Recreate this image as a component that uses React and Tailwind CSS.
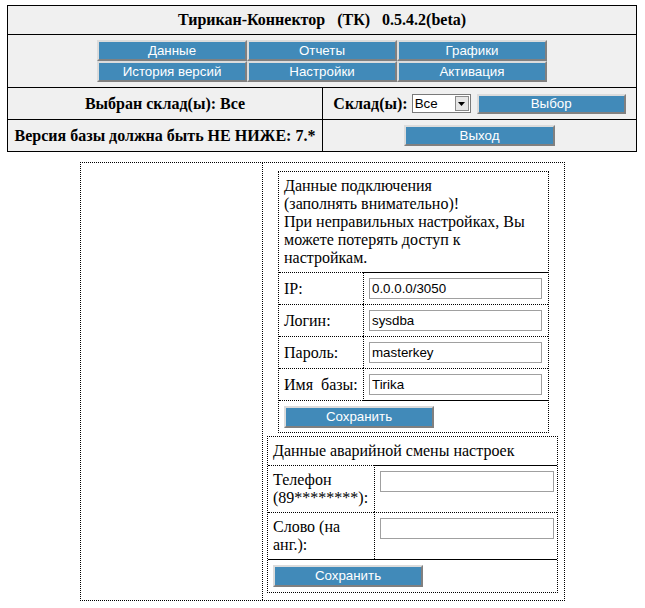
import React from "react";

const SANS = "font-['Liberation_Sans',Arial,sans-serif]";

function Btn({ children, w, h }) {
  return (
    <div
      className={`flex items-center justify-center bg-[#418ab9] text-white font-['Liberation_Sans',Arial,sans-serif] text-[13.33px] leading-none border-2 border-t-[#dcdcdc] border-l-[#dcdcdc] border-r-[#808080] border-b-[#808080] ${w} ${h}`}
    >
      {children}
    </div>
  );
}

function Field({ value, w }) {
  return (
    <input
      readOnly
      defaultValue={value}
      className={`block h-[21px] border border-[#a0a0a0] bg-white pl-[2px] text-[13.33px] text-black font-['Liberation_Sans',Arial,sans-serif] outline-none ${w}`}
    />
  );
}

function Row({ label, value, topSolid, last }) {
  return (
    <div className="flex">
      <div
        className={`w-[84px] flex items-center pl-[5px] border-t border-dotted border-black leading-[18px] ${last ? "border-b" : ""}`}
      >
        <span className="whitespace-pre">{label}</span>
      </div>
      <div
        className={`flex-1 border-l border-dotted border-black pl-[5px] py-[5px] border-t ${topSolid ? "[border-top-style:solid]" : ""} ${last ? "border-b [border-bottom-style:solid]" : ""}`}
      >
        <Field value={value} w="w-[173px]" />
      </div>
    </div>
  );
}

export default function App() {
  return (
    <div className="w-[645px] min-h-[608px] bg-white text-black font-['Liberation_Serif','Times_New_Roman',serif] text-[16px]">
      <div className="h-[5px]" />
      {/* Top header table */}
      <div className="ml-[7px] w-[630px] border border-black bg-[#f0f0f0]">
        <div className="h-[28px] flex items-center justify-center font-bold whitespace-pre">
          {"Тирикан-Коннектор   (ТК)   0.5.4.2(beta)"}
        </div>
        <div className="border-t border-black py-[5px] flex justify-center">
          <div className="grid grid-cols-3 w-[450px]">
            <Btn w="w-[150px]" h="h-[21px]">Данные</Btn>
            <Btn w="w-[150px]" h="h-[21px]">Отчеты</Btn>
            <Btn w="w-[150px]" h="h-[21px]">Графики</Btn>
            <Btn w="w-[150px]" h="h-[21px]">История версий</Btn>
            <Btn w="w-[150px]" h="h-[21px]">Настройки</Btn>
            <Btn w="w-[150px]" h="h-[21px]">Активация</Btn>
          </div>
        </div>
        <div className="border-t border-black flex h-[32px]">
          <div className="w-[314px] flex items-center justify-center font-bold whitespace-nowrap">
            Выбран склад(ы): Все
          </div>
          <div className="flex-1 border-l border-black flex items-center justify-center">
            <span className="font-bold">Склад(ы):</span>
            <div className="ml-[4px] w-[59px] h-[19px] bg-white border border-[#7a7a7a] flex items-center justify-between">
              <span className={`${SANS} text-[13.33px] pl-[2px] leading-none`}>Все</span>
              <div className="mr-[1px] w-[14px] h-[15px] bg-[#e6e6e6] border border-[#8a8a8a] flex items-center justify-center">
                <svg width="7" height="4" viewBox="0 0 7 4">
                  <path d="M0 0H7L3.5 4Z" fill="#000" />
                </svg>
              </div>
            </div>
            <div className="ml-[6px]">
              <Btn w="w-[149px]" h="h-[20px]">Выбор</Btn>
            </div>
          </div>
        </div>
        <div className="border-t border-black flex h-[32px]">
          <div className="w-[314px] flex items-center justify-center font-bold whitespace-nowrap">
            Версия базы должна быть НЕ НИЖЕ: 7.*
          </div>
          <div className="flex-1 border-l border-black flex items-center justify-center">
            <Btn w="w-[151px]" h="h-[21px]">Выход</Btn>
          </div>
        </div>
      </div>

      {/* Lower settings area */}
      <div className="mx-auto mt-[10px] w-[485px] border border-dotted border-black flex">
        <div className="w-[181px]" />
        <div className="flex-1 border-l border-dotted border-black flex flex-col items-start pt-[8px] pb-[7px]">
          {/* Connection table */}
          <div className="ml-[15px] w-[271px] border border-dotted border-black">
            <div className="h-[100px] px-[5px] py-[5px] leading-[18px]">
              Данные подключения
              <br />
              (заполнять внимательно)!
              <br />
              При неправильных настройках, Вы
              <br />
              можете потерять доступ к
              <br />
              настройкам.
            </div>
            <Row label="IP:" value="0.0.0.0/3050" topSolid />
            <Row label="Логин:" value="sysdba" />
            <Row label="Пароль:" value="masterkey" />
            <Row label={"Имя  базы:"} value="Tirika" last />
            <div className="h-[31px] pl-[5px] pt-[5px]">
              <Btn w="w-[150px]" h="h-[22px]">Сохранить</Btn>
            </div>
          </div>

          {/* Emergency table */}
          <div className="ml-[4px] mt-[3px] w-[291px] border border-dotted border-black">
            <div className="h-[28px] flex items-center pl-[5px] leading-[18px]">
              Данные аварийной смены настроек
            </div>
            <div className="flex">
              <div className="w-[106px] h-[47px] border-t border-dotted border-black pl-[5px] flex items-center leading-[18px] whitespace-nowrap">
                <span>
                  Телефон
                  <br />
                  (89********):
                </span>
              </div>
              <div className="flex-1 h-[47px] border-t border-l border-black [border-left-style:dotted] pl-[5px] pt-[5px]">
                <Field value="" w="w-[174px]" />
              </div>
            </div>
            <div className="flex border-b border-black">
              <div className="w-[106px] h-[47px] border-t border-dotted border-black pl-[5px] flex items-center leading-[18px] whitespace-nowrap">
                <span>
                  Слово (на
                  <br />
                  анг.):
                </span>
              </div>
              <div className="flex-1 h-[47px] border-t border-l border-dotted border-black pl-[5px] pt-[5px]">
                <Field value="" w="w-[174px]" />
              </div>
            </div>
            <div className="h-[32px] pl-[5px] pt-[5px]">
              <Btn w="w-[150px]" h="h-[22px]">Сохранить</Btn>
            </div>
          </div>
        </div>
      </div>
    </div>
  );
}
